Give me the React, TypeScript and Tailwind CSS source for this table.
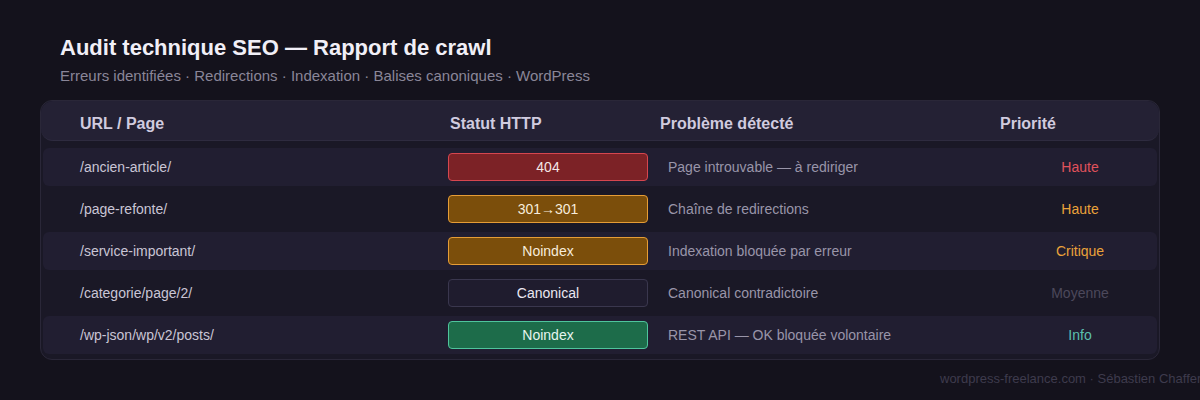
type Row = {
  url: string;
  status: string;
  tone: 'red' | 'orange' | 'neutral' | 'green';
  problem: string;
  priority: string;
  priorityClass: string;
};

const rows: Row[] = [
  { url: '/ancien-article/', status: '404', tone: 'red', problem: 'Page introuvable — à rediriger', priority: 'Haute', priorityClass: 'text-[#e0525c]' },
  { url: '/page-refonte/', status: '301→301', tone: 'orange', problem: 'Chaîne de redirections', priority: 'Haute', priorityClass: 'text-[#eaa23a]' },
  { url: '/service-important/', status: 'Noindex', tone: 'orange', problem: 'Indexation bloquée par erreur', priority: 'Critique', priorityClass: 'text-[#eaa23a]' },
  { url: '/categorie/page/2/', status: 'Canonical', tone: 'neutral', problem: 'Canonical contradictoire', priority: 'Moyenne', priorityClass: 'text-[#4c485b]' },
  { url: '/wp-json/wp/v2/posts/', status: 'Noindex', tone: 'green', problem: 'REST API — OK bloquée volontaire', priority: 'Info', priorityClass: 'text-[#5cbfae]' },
];

const badgeTone = {
  red: 'bg-[#7c2226] border-[#d6464f] text-[#f4e6e6]',
  orange: 'bg-[#7b4e0b] border-[#e69d36] text-[#f7ecdc]',
  neutral: 'bg-[#1f1c2e] border-[#3a374e] text-[#ebe8f2]',
  green: 'bg-[#1d6c4a] border-[#4fc49d] text-[#e6f5ef]',
};

export default function App() {
  return (
    <div className="w-[1200px] h-[400px] overflow-hidden bg-[#14121c] font-['Liberation_Sans',Arial,sans-serif]">
      {/* Titre */}
      <div className="pl-[60px] pt-[34px]">
        <h1 className="text-[22px] font-bold leading-7 text-[#f1eff7]">
          Audit technique SEO — Rapport de crawl
        </h1>
        <p className="mt-1 text-[15px] leading-5 text-[#8a8698]">
          Erreurs identifiées · Redirections · Indexation · Balises canoniques · WordPress
        </p>
      </div>

      {/* Tableau */}
      <div className="mx-10 mt-[14px] rounded-xl border border-[#2a2738] bg-[#1a1826]">
        <div className="grid h-[40px] grid-cols-[370px_210px_340px_1fr] items-center rounded-xl border-b border-[#2e2b3f] bg-[#242134] pt-[7px] pl-[39px] text-base font-bold text-[#d0cbdf]">
          <div>URL / Page</div>
          <div>Statut HTTP</div>
          <div>Problème détecté</div>
          <div>Priorité</div>
        </div>

        <div className="px-0.5 pt-[5px] pb-[3px]">
          {rows.map((row, i) => (
            <div key={i} className="h-[42px] py-0.5">
              <div
                className={`grid h-full grid-cols-[368px_200px_20px_352px_120px] items-center rounded-md pl-[37px] text-sm ${
                  i % 2 === 0 ? 'bg-[#211e31]' : ''
                }`}
              >
                <div className="text-[#c9c5d5]">{row.url}</div>
                <div
                  className={`flex h-7 items-center justify-center rounded border ${badgeTone[row.tone]}`}
                >
                  {row.status}
                </div>
                <div />
                <div className="text-[#9995a9]">{row.problem}</div>
                <div className={`text-center ${row.priorityClass}`}>{row.priority}</div>
              </div>
            </div>
          ))}
        </div>
      </div>

      <div className="mt-[9px] whitespace-nowrap pl-[940px] text-[13px] text-[#3e3b4d]">
        wordpress-freelance.com · Sébastien Chaffer
      </div>
    </div>
  );
}
